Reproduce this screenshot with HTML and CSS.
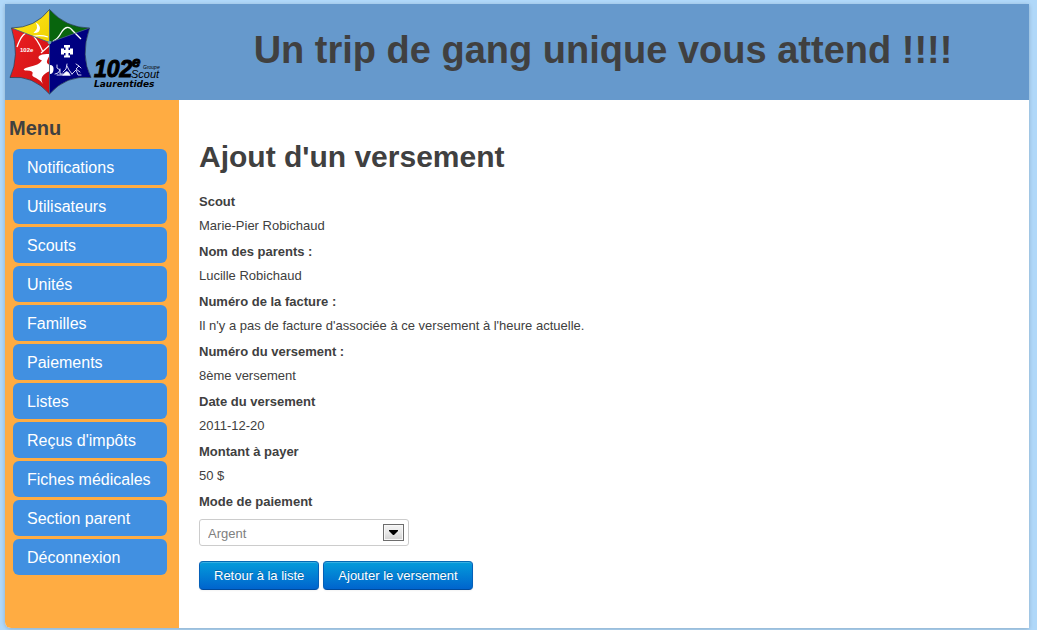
FILE: index.html
```html
<!DOCTYPE html>
<html lang="fr">
<head>
<meta charset="utf-8">
<meta name="viewport" content="width=device-width, initial-scale=1">
<title>Ajout d'un versement</title>
<link rel="stylesheet" href="styles.css">
</head>
<body>
<div class="page">
  <header class="banner">
    <div class="brand">
      <svg class="logo" viewBox="5 4 174 96" role="img" aria-label="102e Groupe Scout Laurentides">
        <defs>
          <linearGradient id="yellow" x1="0" y1="0" x2="1" y2="1"><stop offset="0" stop-color="#ffea20"/><stop offset="1" stop-color="#efd000"/></linearGradient>
          <linearGradient id="red" x1="0" y1="0" x2="1" y2="1"><stop offset="0" stop-color="#ee2022"/><stop offset="1" stop-color="#cb1013"/></linearGradient>
          <linearGradient id="blue" x1="0" y1="0" x2="1" y2="1"><stop offset="0" stop-color="#000085"/><stop offset="1" stop-color="#00007a"/></linearGradient>
          <clipPath id="redArea"><path d="M49.500 42.500L11.500 28Q20 56 10 77.500Q33 75 49.500 94Z"/></clipPath>
          <clipPath id="topArea"><path d="M49.500 42.500L11.500 28Q35 28 49.500 9.500Z"/></clipPath>
        </defs>
        <path d="M49.500 42.500L11.500 28Q35 28 49.500 9.500Z" fill="url(#yellow)"/>
        <path d="M49.500 42.500V9.500Q66 28 89.500 28Z" fill="#08650d"/>
        <path d="M49.500 42.500L11.500 28Q20 56 10 77.500Q33 75 49.500 94Z" fill="url(#red)"/>
        <path d="M49.500 42.500L89.500 28Q80 56 91 77.500Q66 75 49.500 94Z" fill="url(#blue)"/>
        <g clip-path="url(#topArea)" fill="none" stroke="#fff" stroke-width="1.300">
          <path d="M29 38Q38 34 48 37"/>
          <path d="M35.500 22.500Q39.500 28 33.500 33Q40 33.500 40 28Q39.500 24 35.500 22.500Z" fill="#fff" stroke="none"/>
        </g>
        <g clip-path="url(#redArea)">
          <path d="M17 47Q23 30 30 33Q37 38 43 52M41 53L50 45" fill="none" stroke="#fff" stroke-width="1.300"/>
          <path d="M49 54Q42 53.500 39 56Q37 58.500 42 60.500Q39 65 29 67Q21 69 25 70.500Q34 70 32.500 74Q31 76 36 78Q40 80 43 84Q38 76 50 71V65Q45 63.500 48 58.500Q50 56 49 54Z" fill="#fff"/>
        </g>
        <path d="M53 41Q58 39 61 33Q67 23 73 31L81 39" fill="none" stroke="#fff" stroke-width="1.300"/>
        <path d="M64 45h6v2.500h-1.500v2.500h1.500v-1.500h3v6h-3v-1.500h-1.500v2.500h1.500v2h-6v-2h1.500v-2.500h-1.500v1.500h-3v-6h3v1.500h1.500v-2.500h-1.500z" fill="#fff"/>
        <path d="M50 65Q54 65 53.500 70Q53 74 50 74Z" fill="#fff"/>
        <g fill="none" stroke="#e9e9ff" stroke-width=".9" stroke-linecap="round">
          <path d="M57 65v3l3 2-2 3-3 1M60 69v5h3M67 64l-1 5-3 3M67 66l2 4 3 4M76 64l3 2-3 3 4 3M79 66l2 2M72 74l4-4 2 5h3M57 75h6"/>
          <path d="M63 75q4-7 7 0z" fill="#fff"/>
        </g>
        <path d="M49.500 9.500V94M11.500 28L49.500 42.500L89.500 28" fill="none" stroke="#435d78" stroke-width=".8"/>
        <path d="M49.500 9.500Q66 28 89.500 28Q80 56 91 77.500Q66 75 49.500 94Q33 75 10 77.500Q20 56 11.500 28Q35 28 49.500 9.500Z" fill="none" stroke="#253446" stroke-opacity=".65"/>
        <circle cx="49.500" cy="42.500" r="1.800" fill="#6ba0ad"/>
        <text class="mark-small-bold" x="20" y="52">102e</text>
        <text class="mark-number" x="94" y="77">102</text>
        <text class="mark-e" x="132" y="67">e</text>
        <text class="mark-group" x="143" y="69">Groupe</text>
        <text class="mark-scout" x="131" y="78">Scout</text>
        <text class="mark-place" x="94" y="87">Laurentides</text>
      </svg>
    </div>
    <div class="slogan">Un trip de gang unique vous attend !!!!</div>
  </header>
  <div class="columns">
    <nav class="sidebar" aria-labelledby="menu-title">
      <h2 class="menu-title" id="menu-title">Menu</h2>
      <ul class="menu">
        <li><a class="menu-link" href="#">Notifications</a></li>
        <li><a class="menu-link" href="#">Utilisateurs</a></li>
        <li><a class="menu-link" href="#">Scouts</a></li>
        <li><a class="menu-link" href="#">Unités</a></li>
        <li><a class="menu-link" href="#">Familles</a></li>
        <li><a class="menu-link" href="#">Paiements</a></li>
        <li><a class="menu-link" href="#">Listes</a></li>
        <li><a class="menu-link" href="#">Reçus d'impôts</a></li>
        <li><a class="menu-link" href="#">Fiches médicales</a></li>
        <li><a class="menu-link" href="#">Section parent</a></li>
        <li><a class="menu-link" href="#">Déconnexion</a></li>
      </ul>
    </nav>
    <main class="content">
      <h1 class="title">Ajout d'un versement</h1>
      <form class="payment">
        <dl class="details">
          <dt>Scout</dt><dd>Marie-Pier Robichaud</dd>
          <dt>Nom des parents :</dt><dd>Lucille Robichaud</dd>
          <dt>Numéro de la facture :</dt><dd>Il n'y a pas de facture d'associée à ce versement à l'heure actuelle.</dd>
          <dt>Numéro du versement :</dt><dd>8ème versement</dd>
          <dt>Date du versement</dt><dd>2011-12-20</dd>
          <dt>Montant à payer</dt><dd>50 $</dd>
        </dl>
        <label class="field-label" for="mode">Mode de paiement</label>
        <div class="select-box">
          <select class="select" id="mode"><option>Argent</option></select>
          <svg class="select-arrow" viewBox="0 0 21 17" aria-hidden="true">
            <defs><linearGradient id="face" x1="0" y1="0" x2="0" y2="1"><stop offset="0" stop-color="#f4f4f4"/><stop offset=".5" stop-color="#e8e8e8"/><stop offset="1" stop-color="#cfcfcf"/></linearGradient></defs>
            <rect x=".5" y=".5" width="20" height="16" fill="url(#face)" stroke="#6d6d6d"/>
            <rect x="1.500" y="1.500" width="18" height="14" fill="none" stroke="#f8f8f8"/>
            <path d="M6 6h9v1l-4 4h-1L6 7z"/>
          </svg>
        </div>
        <div class="actions">
          <button class="button" type="button">Retour à la liste</button>
          <button class="button" type="submit">Ajouter le versement</button>
        </div>
      </form>
    </main>
  </div>
</div>
</body>
</html>
```
FILE: styles.css
```css
* { box-sizing: border-box; }
body {
  margin: 0;
  padding: 4px 8px 2px 5px;
  min-height: 100vh;
  display: flex;
  background: #b0d8f9;
  color: #404040;
  font: 13px/18px "Liberation Sans", Arial, sans-serif;
}
.page {
  flex: 1;
  display: flex;
  flex-direction: column;
  border-radius: 0 0 0 6px;
  background: #fff;
  box-shadow: 0 1px 4px rgba(0, 0, 0, .2);
}
.banner {
  display: grid;
  grid-template-columns: 174px 1fr;
  align-items: center;
  background: #6699cc;
}
.logo { display: block; width: 174px; height: 96px; }
.mark-small-bold { font: bold 6px "Liberation Sans", sans-serif; fill: #fff; }
.mark-number { font: italic bold 23px "Liberation Sans", sans-serif; stroke: #000; }
.mark-e { font: italic bold 15px "Liberation Sans", sans-serif; stroke: #000; }
.mark-group { font: italic 5px "Liberation Sans", sans-serif; }
.mark-scout { font: italic 11px "Liberation Sans", sans-serif; }
.mark-place { font: italic bold 9px "DejaVu Sans", sans-serif; }
.slogan {
  padding: 0 2px 4px 0;
  text-align: center;
  font-size: 38px;
  line-height: 48px;
  font-weight: bold;
}
.columns {
  flex: 1;
  display: grid;
  grid-template-columns: 174px 1fr;
}
.sidebar {
  padding: 10px 12px 24px 8px;
  border-radius: 0 0 0 6px;
  background: #ffac42;
}
.menu-title {
  margin: 0 0 3px -4px;
  font-size: 20px;
  line-height: 36px;
}
.menu {
  display: grid;
  gap: 3px;
  margin: 0;
  padding: 0;
  list-style: none;
}
.menu-link {
  display: block;
  padding: 2px 14px 0;
  border-radius: 6px;
  background: #4190e1;
  color: #fff;
  font-size: 16px;
  line-height: 34px;
  text-decoration: none;
}
.content { padding: 39px 20px 38px; }
.title {
  margin: 0 0 15px;
  font-size: 30px;
  line-height: 36px;
}
.details { margin: 0; }
.details dt, .field-label {
  display: block;
  font-weight: bold;
  line-height: 24px;
}
.details dd { margin: 0 0 2px; line-height: 24px; }
.select-box {
  display: grid;
  width: 210px;
  margin: 5px 0 15px;
  align-items: center;
}
.select {
  grid-area: 1 / 1;
  width: 100%;
  height: 27px;
  padding: 3px 8px 1px;
  border: 1px solid #ccc;
  border-radius: 3px;
  appearance: none;
  background: #fff;
  color: #808080;
  font: inherit;
}
.select-arrow {
  grid-area: 1 / 1;
  justify-self: end;
  width: 21px;
  height: 17px;
  margin-right: 5px;
  pointer-events: none;
}
.actions { display: flex; gap: 4px; }
.button {
  padding: 4px 14px;
  border: 1px solid;
  border-color: #0569b4 #0560b8 #004a9c;
  border-radius: 4px;
  background: linear-gradient(#049cdb, #0064cd);
  box-shadow: inset 0 1px 0 rgba(255, 255, 255, .2), 0 1px 2px rgba(0, 0, 0, .05);
  color: #fff;
  font: inherit;
  line-height: 19px;
  text-shadow: 0 -1px 0 rgba(0, 0, 0, .25);
}
```
